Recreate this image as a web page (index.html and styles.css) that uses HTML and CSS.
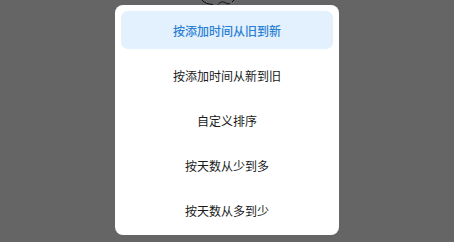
FILE: index.html
```html
<!DOCTYPE html>
<html>
<head>
<meta charset="utf-8">
<link rel="stylesheet" href="styles.css">
</head>
<body>
<div class="screen">
  <svg class="doodle" width="60" height="8" viewBox="0 0 60 8">
    <path d="M22 0 C24 3 28 4 33 4.5" fill="none" stroke="#111" stroke-width="1"/>
    <path d="M38 4.5 C40 2 43 1 46 3 C47 4 49 4 50 3" fill="none" stroke="#111" stroke-width="1"/>
    <path d="M52 2 L54 0" fill="none" stroke="#111" stroke-width="1"/>
  </svg>
  <div class="sheet">
    <div class="item active">按添加时间从旧到新</div>
    <div class="item">按添加时间从新到旧</div>
    <div class="item">自定义排序</div>
    <div class="item">按天数从少到多</div>
    <div class="item">按天数从多到少</div>
  </div>
</div>
</body>
</html>
```
FILE: styles.css
```css
html, body {
  margin: 0;
  padding: 0;
}
body {
  width: 454px;
  height: 242px;
  overflow: hidden;
  background: #656565;
  font-family: "Noto Sans CJK SC", "Noto Sans", sans-serif;
}
.screen {
  position: relative;
  width: 454px;
  height: 242px;
  display: flex;
  justify-content: center;
  padding-top: 5px;
  box-sizing: border-box;
}
.doodle {
  position: absolute;
  left: 180px;
  top: 0;
}
.sheet {
  width: 224px;
  height: 230px;
  box-sizing: border-box;
  background: #ffffff;
  border-radius: 8px;
  padding: 6px;
  display: flex;
  flex-direction: column;
  gap: 7px;
}
.item {
  height: 38px;
  display: flex;
  align-items: center;
  justify-content: center;
  font-size: 12px;
  color: #1a1a1a;
  border-radius: 7px;
}
.item.active {
  background: #e3f0fd;
  color: #2a80d4;
  font-weight: 500;
}
```
